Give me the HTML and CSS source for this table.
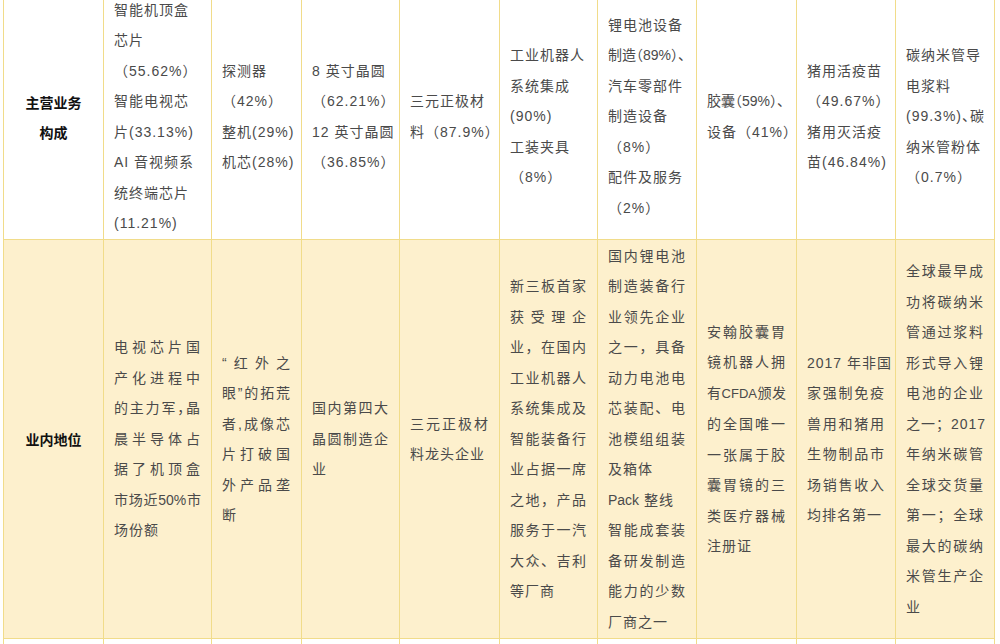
FILE: index.html
```html
<!DOCTYPE html>
<html lang="zh-CN">
<head>
<meta charset="utf-8">
<title>业务构成与业内地位</title>
<link rel="stylesheet" href="styles.css">
</head>
<body>
<table class="grid">
  <colgroup>
    <col class="c-label">
    <col class="c108">
    <col class="c90">
    <col class="c98">
    <col class="c100">
    <col class="c98">
    <col class="c99">
    <col class="c100">
    <col class="c99">
    <col class="c99">
  </colgroup>
  <tbody>
    <tr class="biz">
      <th class="label"><div>主营业务</div><div>构成</div></th>
      <td><div class="ln">智能机顶盒</div><div class="ln">芯片</div><div class="ln">（55.62%）</div><div class="ln">智能电视芯</div><div class="ln">片(33.13%)</div><div class="ln">AI 音视频系</div><div class="ln">统终端芯片</div><div class="ln">(11.21%)</div></td>
      <td><div class="ln">探测器</div><div class="ln">（42%）</div><div class="ln">整机(29%)</div><div class="ln">机芯(28%)</div></td>
      <td><div class="ln">8 英寸晶圆</div><div class="ln">（62.21%）</div><div class="ln">12 英寸晶圆</div><div class="ln">（36.85%）</div></td>
      <td><div class="ln">三元正极材</div><div class="ln">料（87.9%）</div></td>
      <td><div class="ln">工业机器人</div><div class="ln">系统集成</div><div class="ln">(90%)</div><div class="ln">工装夹具</div><div class="ln">（8%）</div></td>
      <td><div class="ln">锂电池设备</div><div class="ln t0">制造<span class="h">（</span>89%<span class="h">）、</span></div><div class="ln">汽车零部件</div><div class="ln">制造设备</div><div class="ln">（8%）</div><div class="ln">配件及服务</div><div class="ln">（2%）</div></td>
      <td><div class="ln t0">胶囊<span class="h">（</span>59%<span class="h">）、</span></div><div class="ln">设备（41%）</div></td>
      <td><div class="ln">猪用活疫苗</div><div class="ln">（49.67%）</div><div class="ln">猪用灭活疫</div><div class="ln">苗(46.84%)</div></td>
      <td><div class="ln">碳纳米管导</div><div class="ln">电浆料</div><div class="ln">(99.3%)<span class="h">、</span>碳</div><div class="ln">纳米管粉体</div><div class="ln">（0.7%）</div></td>
    </tr>
    <tr class="pos">
      <th class="label"><div>业内地位</div></th>
      <td><div class="ln">电视芯片国</div><div class="ln">产化进程中</div><div class="ln">的主力军<span class="h">，</span>晶</div><div class="ln">晨半导体占</div><div class="ln">据了机顶盒</div><div class="ln t0">市场近50%市</div><div class="ln">场份额</div></td>
      <td><div class="ln">“红外之</div><div class="ln">眼”的拓荒</div><div class="ln">者,成像芯</div><div class="ln">片打破国</div><div class="ln">外产品垄</div><div class="ln">断</div></td>
      <td><div class="ln">国内第四大</div><div class="ln">晶圆制造企</div><div class="ln">业</div></td>
      <td><div class="ln">三元正极材</div><div class="ln">料龙头企业</div></td>
      <td><div class="ln">新三板首家</div><div class="ln">获受理企</div><div class="ln">业，在国内</div><div class="ln">工业机器人</div><div class="ln">系统集成及</div><div class="ln">智能装备行</div><div class="ln">业占据一席</div><div class="ln">之地，产品</div><div class="ln">服务于一汽</div><div class="ln">大众、吉利</div><div class="ln">等厂商</div></td>
      <td><div class="ln">国内锂电池</div><div class="ln">制造装备行</div><div class="ln">业领先企业</div><div class="ln">之一，具备</div><div class="ln">动力电池电</div><div class="ln">芯装配、电</div><div class="ln">池模组组装</div><div class="ln nj">及箱体</div><div class="ln nj"><span class="lat">Pack</span> 整线</div><div class="ln">智能成套装</div><div class="ln">备研发制造</div><div class="ln">能力的少数</div><div class="ln">厂商之一</div></td>
      <td><div class="ln">安翰胶囊胃</div><div class="ln">镜机器人拥</div><div class="ln t0">有<span class="cfda">CFDA</span>颁发</div><div class="ln">的全国唯一</div><div class="ln">一张属于胶</div><div class="ln">囊胃镜的三</div><div class="ln">类医疗器械</div><div class="ln">注册证</div></td>
      <td><div class="ln">2017 年非国</div><div class="ln">家强制免疫</div><div class="ln">兽用和猪用</div><div class="ln">生物制品市</div><div class="ln">场销售收入</div><div class="ln">均排名第一</div></td>
      <td><div class="ln">全球最早成</div><div class="ln">功将碳纳米</div><div class="ln">管通过浆料</div><div class="ln">形式导入锂</div><div class="ln">电池的企业</div><div class="ln">之一；2017</div><div class="ln">年纳米碳管</div><div class="ln">全球交货量</div><div class="ln">第一；全球</div><div class="ln">最大的碳纳</div><div class="ln">米管生产企</div><div class="ln">业</div></td>
    </tr>
    <tr class="next">
      <th class="label"></th>
      <td></td><td></td><td></td><td></td><td></td><td></td><td></td><td></td><td></td>
    </tr>
  </tbody>
</table>
</body>
</html>
```

FILE: styles.css
```css
html, body {
  margin: 0;
  padding: 0;
  background: #ffffff;
}

body {
  overflow: hidden;
}

.grid {
  border-collapse: collapse;
  table-layout: fixed;
  width: 992px;
  margin: -7px 0 0 3px;
  font-family: "Liberation Sans", "Noto Sans CJK SC", sans-serif;
  font-size: 14px;
  color: #4a4a4a;
}

.c-label { width: 100px; }
.c108 { width: 108px; }
.c90 { width: 90px; }
.c98 { width: 98px; }
.c99 { width: 99px; }
.c100 { width: 100px; }

.grid th,
.grid td {
  border: 1px solid #f1dc8a;
  padding: 0 10px;
  vertical-align: middle;
}

.label {
  font-family: "Noto Sans CJK SC", sans-serif;
  font-weight: 700;
  font-size: 14px;
  color: #111111;
  text-align: center;
  line-height: 30px;
  padding: 0;
}

.ln {
  line-height: 30.5px;
  letter-spacing: 1px;
  white-space: nowrap;
  text-align: left;
}

.ln.t0 {
  letter-spacing: 0;
}

.h {
  font-feature-settings: "halt";
}

.lat {
  letter-spacing: 0;
}

.cfda {
  font-size: 13px;
  letter-spacing: 0;
}

.biz > th,
.biz > td {
  height: 245px;
  background: #ffffff;
}

.pos > th,
.pos > td {
  height: 398px;
  background: #fdf0cd;
}

.pos .ln:not(:last-child) {
  text-align-last: justify;
}

.pos .ln.nj {
  text-align-last: left;
}

.next > th,
.next > td {
  height: 40px;
  background: #ffffff;
}
```
